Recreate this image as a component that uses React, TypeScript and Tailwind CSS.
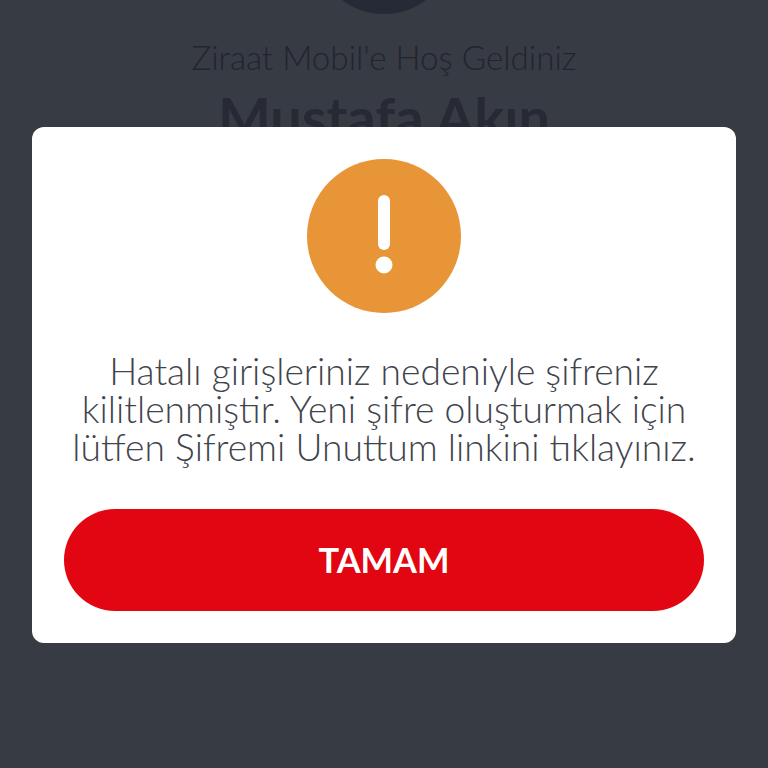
export default function App() {
  return (
    <div className="relative h-[768px] w-[768px] overflow-hidden bg-[#373b43] font-['Lato',sans-serif]">
      <div className="flex flex-col items-center">
        <div className="mt-[-126px] h-[140px] w-[140px] rounded-full bg-[#252a36]" />
        <p className="mt-[24px] text-[33.2px] font-light leading-[38px] text-[#22252f]">Ziraat Mobil'e Hoş Geldiniz</p>
        <p className="mt-[9px] text-[56px] font-bold leading-[64px] text-[#272a34]">Mustafa Akın</p>
      </div>
      <div className="absolute left-8 top-[127px] flex w-[704px] flex-col items-center rounded-xl bg-white p-8">
        <div className="flex h-[154px] w-[154px] items-center justify-center rounded-full bg-[#e79536]">
          <svg width="154" height="154" viewBox="0 0 154 154">
            <rect x="71" y="36" width="12" height="55" rx="6" fill="#fff" />
            <circle cx="77" cy="106" r="8.5" fill="#fff" />
          </svg>
        </div>
        <p className="mt-[39px] whitespace-nowrap text-center text-[37.2px] font-light leading-[38px] text-[#3f444c]">
          Hatalı girişleriniz nedeniyle şifreniz
          <br />
          kilitlenmiştir. Yeni şifre oluşturmak için
          <br />
          lütfen Şifremi Unuttum linkini tıklayınız.
        </p>
        <button className="mt-[43px] flex h-[102px] w-full items-center justify-center rounded-full bg-[#e20512] text-[34.4px] font-bold text-white">
          TAMAM
        </button>
      </div>
    </div>
  );
}
